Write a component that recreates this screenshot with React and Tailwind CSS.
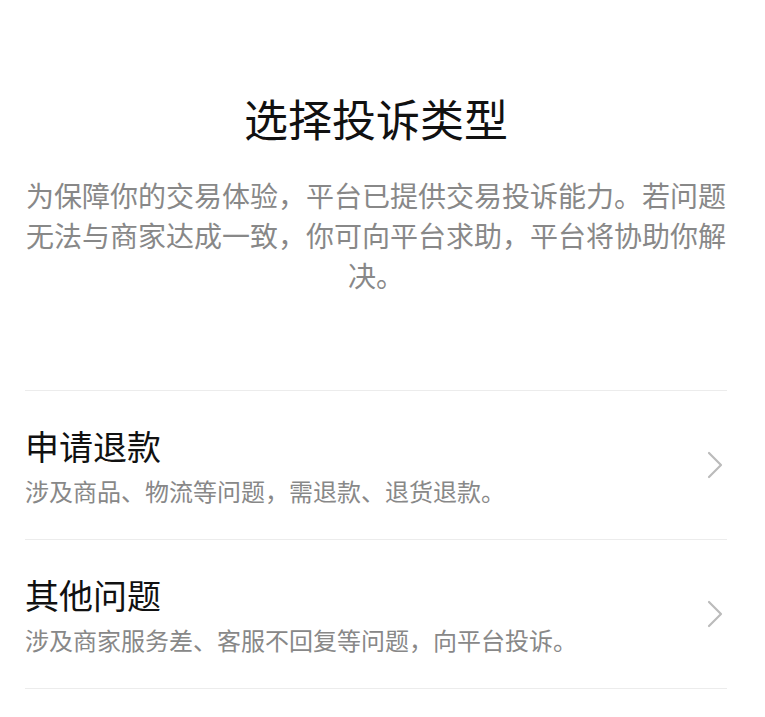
const items = [
  { title: "申请退款", desc: "涉及商品、物流等问题，需退款、退货退款。" },
  { title: "其他问题", desc: "涉及商家服务差、客服不回复等问题，向平台投诉。" },
]

function Chevron() {
  return (
    <svg width="16" height="28" viewBox="0 0 16 28" fill="none" className="mr-[4px] shrink-0">
      <path d="M2 2L14 14L2 26" stroke="#bbb" strokeWidth="2.2" strokeLinecap="round" strokeLinejoin="round" />
    </svg>
  )
}

export default function App() {
  return (
    <div
      className="min-h-[717px] bg-white"
      style={{ fontFamily: '"Noto Sans CJK SC", "Noto Sans", sans-serif' }}
    >
      <div className="ml-[25px] w-[702px] pt-[91px]">
        <h1 className="text-center text-[44px] leading-[54px] font-normal text-[#111]">选择投诉类型</h1>
        <p className="mt-[30px] text-center text-[28px] leading-[40px] text-[#888]">
          为保障你的交易体验，平台已提供交易投诉能力。若问题无法与商家达成一致，你可向平台求助，平台将协助你解决。
        </p>
        <div className="mt-[95px] border-t border-[#ececec]">
          {items.map((item) => (
            <div key={item.title} className="flex h-[149px] items-center border-b border-[#ececec]">
              <div className="flex-1">
                <div className="text-[34px] leading-[44px] text-[#111]">{item.title}</div>
                <div className="mt-[7px] text-[24px] leading-[32px] text-[#888]">{item.desc}</div>
              </div>
              <Chevron />
            </div>
          ))}
        </div>
      </div>
    </div>
  )
}
